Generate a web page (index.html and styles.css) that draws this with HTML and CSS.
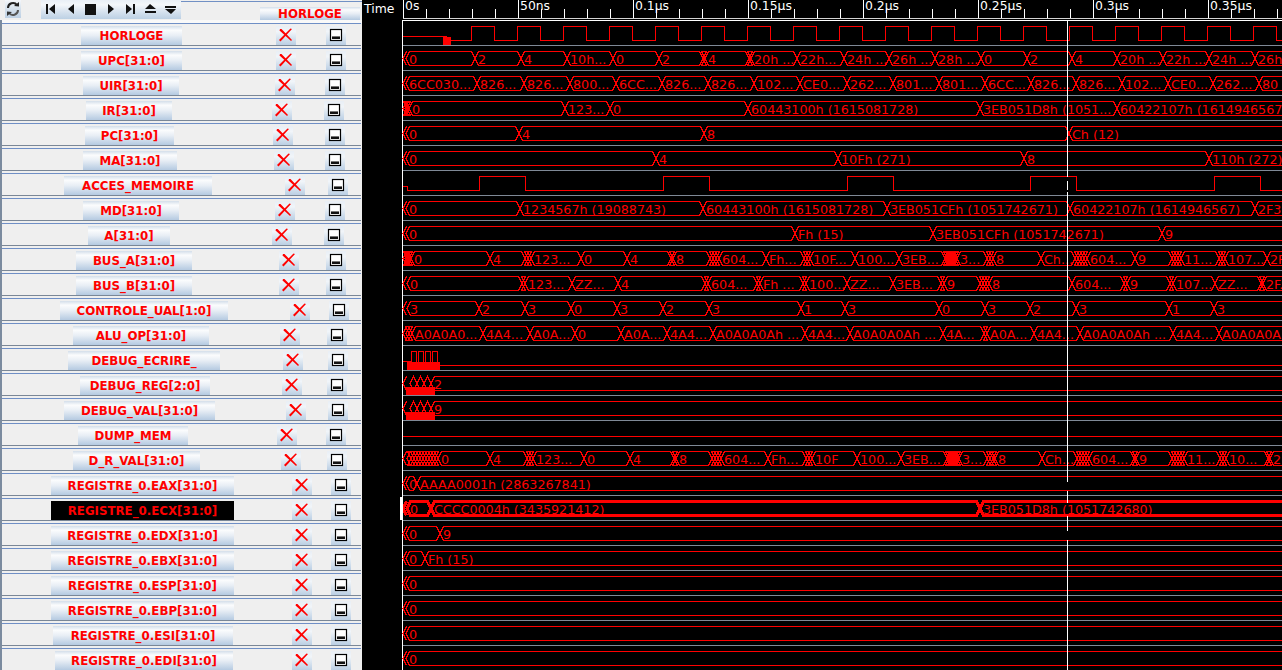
FILE: index.html
```html
<!DOCTYPE html>
<html lang="en">
<head>
<meta charset="utf-8">
<title>Waveform viewer</title>
<link rel="stylesheet" href="styles.css">
</head>
<body>
<svg class="defs" width="0" height="0" aria-hidden="true">
  <symbol id="i-x" viewBox="0 0 20 19">
    <path d="M4 3 L5.5 3 L16 14 L15 15 L14 14 L3.5 4.5 Z" fill="#f00"/>
    <path d="M16 3 L14.5 2.5 L3 14 L4.5 15.5 Z" fill="#f00"/>
  </symbol>
  <symbol id="i-min" viewBox="0 0 20 19">
    <rect x="4.5" y="3.5" width="11" height="11" fill="#fff" stroke="#000" stroke-width="1.2"/>
    <rect x="6" y="10" width="8" height="1" fill="#777"/>
    <rect x="6" y="11" width="8" height="2" fill="#111"/>
  </symbol>
</svg>
<div class="app">
  <aside class="signals">
    <header class="hdr">
      <button class="refresh" aria-label="refresh">
        <svg width="16" height="18" viewBox="0 0 16 18">
          <path d="M3 8 A5 5 0 0 1 12 5" fill="none" stroke="#222" stroke-width="2"/>
          <path d="M13 10 A5 5 0 0 1 4 13" fill="none" stroke="#555" stroke-width="2"/>
          <path d="M9 6 L14 6.500 L14 2 Z" fill="#222"/>
          <path d="M7 12 L2 11.500 L2 16 Z" fill="#333"/>
        </svg>
      </button>
      <div class="transport">
        <svg width="140" height="19" viewBox="41 0 140 19" fill="#111">
          <path d="M46 4h2v10h-2z M55 4v10l-6-5z"/>
          <path d="M74 4v10l-6-5z"/>
          <path d="M85 4h11v11h-11z"/>
          <path d="M108 4v10l6-5z"/>
          <path d="M126 4v10l6-5z M133 4h2v10h-2z"/>
          <path d="M145 9l5-5 6 5z M145 11h11v2h-11z"/>
          <path d="M165 6h11v2h-11z M165 9h11l-5 5z"/>
        </svg>
      </div>
      <div class="hdr-fill"><span class="btn hdr-btn">HORLOGE</span></div>
    </header>
    <div class="rows">
      <div class="row r-clk"><span class="btn">HORLOGE</span><svg class="tile x"><use href="#i-x"/></svg><svg class="tile m"><use href="#i-min"/></svg></div>
      <div class="row r-clk"><span class="btn">UPC[31:0]</span><svg class="tile x"><use href="#i-x"/></svg><svg class="tile m"><use href="#i-min"/></svg></div>
      <div class="row r-uir"><span class="btn">UIR[31:0]</span><svg class="tile x"><use href="#i-x"/></svg><svg class="tile m"><use href="#i-min"/></svg></div>
      <div class="row r-ir"><span class="btn">IR[31:0]</span><svg class="tile x"><use href="#i-x"/></svg><svg class="tile m"><use href="#i-min"/></svg></div>
      <div class="row r-pc"><span class="btn">PC[31:0]</span><svg class="tile x"><use href="#i-x"/></svg><svg class="tile m"><use href="#i-min"/></svg></div>
      <div class="row r-ma"><span class="btn">MA[31:0]</span><svg class="tile x"><use href="#i-x"/></svg><svg class="tile m"><use href="#i-min"/></svg></div>
      <div class="row r-acc"><span class="btn">ACCES_MEMOIRE</span><svg class="tile x"><use href="#i-x"/></svg><svg class="tile m"><use href="#i-min"/></svg></div>
      <div class="row r-uir"><span class="btn">MD[31:0]</span><svg class="tile x"><use href="#i-x"/></svg><svg class="tile m"><use href="#i-min"/></svg></div>
      <div class="row r-a"><span class="btn">A[31:0]</span><svg class="tile x"><use href="#i-x"/></svg><svg class="tile m"><use href="#i-min"/></svg></div>
      <div class="row r-bus"><span class="btn">BUS_A[31:0]</span><svg class="tile x"><use href="#i-x"/></svg><svg class="tile m"><use href="#i-min"/></svg></div>
      <div class="row r-bus"><span class="btn">BUS_B[31:0]</span><svg class="tile x"><use href="#i-x"/></svg><svg class="tile m"><use href="#i-min"/></svg></div>
      <div class="row r-ctl"><span class="btn">CONTROLE_UAL[1:0]</span><svg class="tile x"><use href="#i-x"/></svg><svg class="tile m"><use href="#i-min"/></svg></div>
      <div class="row r-alu"><span class="btn">ALU_OP[31:0]</span><svg class="tile x"><use href="#i-x"/></svg><svg class="tile m"><use href="#i-min"/></svg></div>
      <div class="row r-ecr"><span class="btn">DEBUG_ECRIRE_</span><svg class="tile x"><use href="#i-x"/></svg><svg class="tile m"><use href="#i-min"/></svg></div>
      <div class="row r-reg"><span class="btn">DEBUG_REG[2:0]</span><svg class="tile x"><use href="#i-x"/></svg><svg class="tile m"><use href="#i-min"/></svg></div>
      <div class="row r-val"><span class="btn">DEBUG_VAL[31:0]</span><svg class="tile x"><use href="#i-x"/></svg><svg class="tile m"><use href="#i-min"/></svg></div>
      <div class="row r-dmp"><span class="btn">DUMP_MEM</span><svg class="tile x"><use href="#i-x"/></svg><svg class="tile m"><use href="#i-min"/></svg></div>
      <div class="row r-drv"><span class="btn">D_R_VAL[31:0]</span><svg class="tile x"><use href="#i-x"/></svg><svg class="tile m"><use href="#i-min"/></svg></div>
      <div class="row r-reg0"><span class="btn">REGISTRE_0.EAX[31:0]</span><svg class="tile x"><use href="#i-x"/></svg><svg class="tile m"><use href="#i-min"/></svg></div>
      <div class="row r-reg0"><span class="btn selected">REGISTRE_0.ECX[31:0]</span><svg class="tile x"><use href="#i-x"/></svg><svg class="tile m"><use href="#i-min"/></svg></div>
      <div class="row r-reg0"><span class="btn">REGISTRE_0.EDX[31:0]</span><svg class="tile x"><use href="#i-x"/></svg><svg class="tile m"><use href="#i-min"/></svg></div>
      <div class="row r-reg0"><span class="btn">REGISTRE_0.EBX[31:0]</span><svg class="tile x"><use href="#i-x"/></svg><svg class="tile m"><use href="#i-min"/></svg></div>
      <div class="row r-reg0"><span class="btn">REGISTRE_0.ESP[31:0]</span><svg class="tile x"><use href="#i-x"/></svg><svg class="tile m"><use href="#i-min"/></svg></div>
      <div class="row r-reg0"><span class="btn">REGISTRE_0.EBP[31:0]</span><svg class="tile x"><use href="#i-x"/></svg><svg class="tile m"><use href="#i-min"/></svg></div>
      <div class="row r-esi"><span class="btn">REGISTRE_0.ESI[31:0]</span><svg class="tile x"><use href="#i-x"/></svg><svg class="tile m"><use href="#i-min"/></svg></div>
      <div class="row r-edi"><span class="btn">REGISTRE_0.EDI[31:0]</span><svg class="tile x"><use href="#i-x"/></svg><svg class="tile m"><use href="#i-min"/></svg></div>
    </div>
  </aside>
  <svg id="wave" class="wave" width="920" height="670" viewBox="362 0 920 670"></svg>
</div>
<script src="wave.js"></script>
</body>
</html>
```
FILE: styles.css
```css
html, body { margin: 0; padding: 0; background: #000; overflow: hidden; }
.defs { position: absolute; }
.app { display: flex; width: 1282px; height: 670px; overflow: hidden; }
.signals {
  width: 362px; flex: none; background: #efefef; overflow: hidden;
  font: bold 11.8px "DejaVu Sans", sans-serif; color: #f00;
}
.hdr { display: flex; height: 20px; }
.refresh {
  margin: 0 20px 2px 5px; padding: 0; border: 0; width: 16px; height: 18px;
  background: linear-gradient(#f4f7fa 0, #d4e0ec 50%, #bdd0e4 100%);
}
.transport { width: 140px; height: 19px; background: linear-gradient(#e9eff6 0, #f4f7fa 25%, #d8e3ef 60%, #bcd0e4 100%); }
.transport svg { display: block; }
.hdr-fill {
  flex: 1; margin-top: 1px; border-top: 1px solid #7190c4;
  display: flex; justify-content: flex-end; padding: 5px 2px 0 0; box-sizing: border-box; height: 19px;
}
.btn {
  display: block; box-sizing: border-box; height: 19px; line-height: 20px; text-align: center; white-space: nowrap;
  background: linear-gradient(#d3deea 0, #fbfcfd 22%, #e8eef5 50%, #b5cae1 100%);
}
.hdr-btn { width: 100px; height: 13px; line-height: 14px; padding: 0; overflow: visible; }
.btn.selected { background: #000; }
.rows {
  border-left: 2px solid #7b8b9f; padding-top: 3px;
  background: linear-gradient(#f9f9f9 3px, #efefef 3px);
}
.row {
  display: flex; height: 19px; padding-top: 2px; margin: 0 0 2px 0;
  border-top: 1px solid #6f8fc6; border-bottom: 1px solid #7a8797;
  width: 359px;
}
.row .btn { margin-left: calc(var(--l) - 2px); width: var(--w); flex: none; }
.tile {
  display: block; width: 20px; height: 19px; flex: none;
  background: linear-gradient(#e8eef5 0, #f1f5f9 30%, #d6e2ee 65%, #bbcfe4 100%);
}
.tile.x { margin-left: calc(var(--x) - var(--l) - var(--w)); }
.tile.m { margin-left: calc(var(--m) - var(--x) - 20px); }
.r-clk { --l: 81px; --w: 101px; --x: 276px; --m: 326px; }
.r-uir { --l: 83px; --w: 96px; --x: 275px; --m: 325px; }
.r-ir  { --l: 86px; --w: 86px; --x: 272px; --m: 324px; }
.r-pc  { --l: 85px; --w: 89px; --x: 273px; --m: 325px; }
.r-ma  { --l: 83px; --w: 94px; --x: 274px; --m: 325px; }
.r-acc { --l: 64px; --w: 148px; --x: 285px; --m: 328px; }
.r-a   { --l: 88px; --w: 82px; --x: 272px; --m: 324px; }
.r-bus { --l: 76px; --w: 116px; --x: 279px; --m: 326px; }
.r-ctl { --l: 60px; --w: 168px; --x: 290px; --m: 329px; }
.r-alu { --l: 73px; --w: 136px; --x: 280px; --m: 327px; }
.r-ecr { --l: 68px; --w: 152px; --x: 283px; --m: 328px; }
.r-reg { --l: 80px; --w: 130px; --x: 282px; --m: 327px; }
.r-val { --l: 64px; --w: 151px; --x: 286px; --m: 328px; }
.r-dmp { --l: 78px; --w: 110px; --x: 277px; --m: 326px; }
.r-drv { --l: 73px; --w: 127px; --x: 281px; --m: 327px; }
.r-reg0 { --l: 51px; --w: 183px; --x: 292px; --m: 331px; }
.r-esi { --l: 53px; --w: 180px; --x: 292px; --m: 331px; }
.r-edi { --l: 55px; --w: 178px; --x: 292px; --m: 331px; }
.wave { display: block; flex: none; background: #000; }
.wave .lbl { font: 12.7px "DejaVu Sans", sans-serif; fill: #f00; }
.wave .rul { font: 12.4px "DejaVu Sans", sans-serif; fill: #fff; }
.wave .sig { fill: none; stroke: #f00; stroke-width: 1; shape-rendering: crispEdges; }
.wave .sig.thick { stroke-width: 3; }
.wave .blk { fill: #f00; shape-rendering: crispEdges; }
.wave .sep { fill: #7f8996; shape-rendering: crispEdges; }
.wave .wht { fill: #fff; shape-rendering: crispEdges; }
.wave .gry { fill: #d4d4d4; shape-rendering: crispEdges; }
```
FILE: wave.js
```js
(function () {
  var NS = 'http://www.w3.org/2000/svg';
  var svg = document.getElementById('wave');
  function el(tag, attrs, text) {
    var e = document.createElementNS(NS, tag);
    for (var k in attrs) e.setAttribute(k, attrs[k]);
    if (text !== undefined) e.textContent = text;
    svg.appendChild(e);
    return e;
  }
  function rect(c, x, y, w, h) { el('rect', { 'class': c, x: x, y: y, width: w, height: h }); }
  function line(d, cls) { el('path', { 'class': 'sig' + (cls ? ' ' + cls : ''), d: d }); }

  var HI = function (k) { return 26.5 + 25 * k; };
  var LO = function (k) { return 40.5 + 25 * k; };

  // ruler
  rect('wht', 403, 0, 1, 18);
  rect('gry', 403, 18, 879, 1);
  rect('wht', 403, 20, 879, 1);
  rect('wht', 402, 20, 1, 650);
  el('text', { 'class': 'rul', x: 364, y: 13 }, 'Time');
  var names = ['0s', '50ns', '0.1\u00b5s', '0.15\u00b5s', '0.2\u00b5s', '0.25\u00b5s', '0.3\u00b5s', '0.35\u00b5s'];
  names.forEach(function (n, i) {
    var x = 403 + 115 * i;
    rect('wht', x, 0, 1, 18);
    el('text', { 'class': 'rul', x: x + 2, y: 10 }, n);
    for (var j = 1; j < 5; j++) {
      var t = x + 23 * j;
      if (t < 1282) rect('wht', t, 9, 1, 9);
    }
  });

  // row separators
  for (var k = 0; k < 26; k++) rect('sep', 403, 45 + 25 * k, 879, 1);

  // single-bit signals
  function digital(k, start, edges) {
    var hi = HI(k), lo = LO(k), level = lo;
    var d = start;
    edges.forEach(function (x) {
      d += ' L' + x + ' ' + level;
      level = level === lo ? hi : lo;
      d += ' L' + x + ' ' + level;
    });
    d += ' L1282 ' + level;
    line(d);
  }
  var clk = [];
  for (var x = 471; x < 1282; x += 23) clk.push(x);
  digital(0, 'M451 40.500', clk);
  line('M403 36.500 L447 36.500');
  rect('blk', 443, 37, 8, 8);

  line('M403 186.500 L407 186.500 L407 190.500');
  digital(6, 'M407 190.500', [479, 525, 663, 709, 847, 893, 1030, 1076, 1214, 1260]);

  // DEBUG_ECRIRE_ short pulses
  line('M403 361.500 L411 361.500');
  [411, 418, 425, 432].forEach(function (x) {
    line('M' + x + ' 365.500 L' + x + ' 351.500 L' + (x + 5) + ' 351.500 L' + (x + 5) + ' 365.500');
  });
  line('M437 365.500 L1282 365.500');
  rect('blk', 407, 362, 33, 8);

  // DUMP_MEM
  line('M403 436.500 L1282 436.500');

  // bus signals: every value change is an X of fixed slant, so close changes overlap.
  // The very first change of a row only shows its opening chevron.
  function bus(k, data, cls) {
    var hi = HI(k), lo = LO(k), mid = (hi + lo) / 2, s = 3.5;
    var pts = data.split('|').map(function (t) {
      var i = t.indexOf(':');
      return i < 0 ? [+t, ''] : [+t.slice(0, i), t.slice(i + 1)];
    });
    pts.forEach(function (p, i) {
      var a = p[0], b = i + 1 < pts.length ? pts[i + 1][0] : 1300;
      if (i === 0) {
        line('M' + (a + s) + ' ' + hi + ' L' + a + ' ' + mid + ' L' + (a + s) + ' ' + lo, cls);
      } else {
        line('M' + a + ' ' + mid + ' L' + (a + s) + ' ' + hi + ' L' + (b - s) + ' ' + hi +
             ' L' + b + ' ' + mid + ' L' + (b - s) + ' ' + lo + ' L' + (a + s) + ' ' + lo + ' Z', cls);
      }
      if (p[1]) el('text', { 'class': 'lbl', x: a + 3, y: mid + 5 }, p[1]);
    });
  }
  bus(1, '403|406:0|475:2|521:4|567:10h...|613:0|659:2|703|705:4|749|751:20h ...|797:22h...|844:24h ...|889:26h ...|935:28h ...|981:0|1027:2|1072:4|1117:20h ...|1163:22h ...|1209:24h ...|1255:26h...');
  bus(2, '403|406:6CC030...|477:826...|524:826...|570:800...|616:6CC...|662:826...|708:826...|754:102...|800:CE0...|847:262...|893:801...|939:801...|985:6CC...|1031:826...|1076:826...|1122:102...|1168:CE0...|1213:262...|1259:80');
  bus(3, '403|405|407|409:0|565:123...|610:0|748:60443100h (1615081728)|980:3EB051D8h (1051...|1117:60422107h (1614946567');
  bus(4, '403|406:0|519:4|704:8|1069:Ch (12)');
  bus(5, '403|406:0|656:4|838:10Fh (271)|1024:8|1209:110h (272)');
  bus(7, '403|406:0|520:1234567h (19088743)|703:60443100h (1615081728)|887:3EB051CFh (1051742671)|1070:60422107h (1614946567)|1255:2F3...');
  bus(8, '403|406:0|795:Fh (15)|933:3EB051CFh (1051742671)|1162:9');
  bus(9, '403|405|407|409|411:0|490:4|525|528|531:123...|581:0|627:4|671|673:8|710|713|716|719:604...|766:Fh...|804|807|810:10F...|855:100...|899:3EB...|945|947|949|951|953|955|957:3...|987|990|993:8|1041:Ch...|1075|1078|1081|1084|1087:604...|1135:9|1172|1175|1178|1181:11...|1219|1222|1225:107...|1267:2F...');
  bus(10, '403|407:0|522|525:123...|572:ZZ...|618:4|705|708:604...|757|760:Fh ...|803|806:100...|847:ZZ...|893:3EB...|941|944:9|980|983|986|989:8|1072:604...|1124|1127:9|1170|1173:107...|1215:ZZ...|1261|1263:2F...');
  bus(11, '403|407:3|479:2|525:3|571:0|617:3|663:2|709:3|801:1|845:3|939:0|985:3|1030:2|1076:3|1169:1|1214:3');
  bus(12, '403|406|409|412:A0A0A0...|483:4A4...|530:A0A...|575:0|621:A0A...|667:4A4...|713:A0A0A0Ah ...|805:4A4...|850:A0A0A0Ah ...|943:4A...|984|987:A0A...|1034:4A4...|1080:A0A0A0Ah ...|1173:4A4...|1219:A0A0A0A');
  bus(14, '403|410|417|424|431:2');
  bus(15, '403|410|417|424|431:9');
  bus(17, '403|407|411|414|417|420|423|426|429|432|435|438:0|490:4|527|530|533:123...|584:0|630:4|674|676:8|712|715|718|721:604...|768:Fh...|806|809|812:10F|857:100...|901:3EB...|947|949|951|953|955|957|959:3...|987|990|993|995:8|1042:Ch...|1077|1080|1083|1086|1089:604...|1134|1136:9|1172|1175|1178|1181|1184:11...|1220|1223|1226:10...|1268|1270:2F');
  bus(18, '403|406:0|417:AAAA0001h (2863267841)');
  bus(19, '403|407:0|431:CCCC0004h (3435921412)|980:3EB051D8h (1051742680)', 'thick');
  bus(20, '403|406:0|440:9');
  bus(21, '403|406:0|425:Fh (15)');
  bus(22, '403|406:0');
  bus(23, '403|406:0');
  bus(24, '403|406:0');
  bus(25, '403|406:0');

  rect('blk', 406, 387, 29, 8);
  rect('blk', 406, 412, 29, 8);

  // selected-row marker
  rect('wht', 400, 497, 3, 23);

  // cursor
  var stops = [[21, 177], [181, 190], [192, 482], [491, 503], [516, 531], [540, 670]];
  stops.forEach(function (s) { rect('wht', 1067, s[0], 1, s[1] - s[0]); });
})();
```
